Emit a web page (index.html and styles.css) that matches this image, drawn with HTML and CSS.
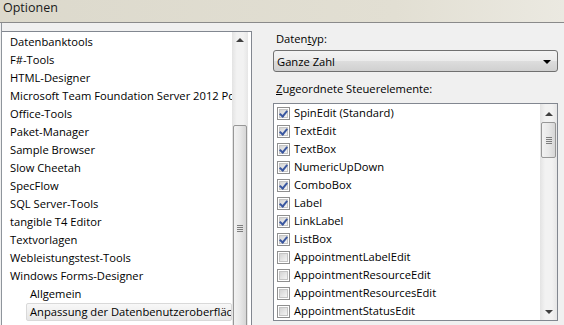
FILE: index.html
```html
<!DOCTYPE html>
<html lang="de">
<head>
    <meta charset="UTF-8">
    <title>Optionen</title>
    <link rel="stylesheet" href="styles.css">
</head>
<body>
    <div class="window">
        <div class="titlebar">Optionen</div>

        <div class="main">
            <div class="left">
                <div class="tree">
                    <div class="tree-items">
                        <div class="node">Datenbanktools</div>
                        <div class="node">F#-Tools</div>
                        <div class="node">HTML-Designer</div>
                        <div class="node">Microsoft Team Foundation Server 2012 Power Tools</div>
                        <div class="node">Office-Tools</div>
                        <div class="node">Paket-Manager</div>
                        <div class="node">Sample Browser</div>
                        <div class="node">Slow Cheetah</div>
                        <div class="node">SpecFlow</div>
                        <div class="node">SQL Server-Tools</div>
                        <div class="node">tangible T4 Editor</div>
                        <div class="node">Textvorlagen</div>
                        <div class="node">Webleistungstest-Tools</div>
                        <div class="node">Windows Forms-Designer</div>
                        <div class="node child">Allgemein</div>
                        <div class="node child selected"><span>Anpassung der Datenbenutzeroberfläche</span></div>
                    </div>
                    <div class="scrollbar tree-scroll">
                        <div class="arrow-box"><span class="arrow up"></span></div>
                        <div class="track short"></div>
                        <div class="thumb long"><span class="grip"></span></div>
                    </div>
                </div>
            </div>

            <div class="right">
                <div class="label">Daten<u>t</u>yp:</div>
                <div class="combo">
                    <span>Ganze Zahl</span>
                    <span class="combo-arrow"></span>
                </div>

                <div class="label second"><u>Z</u>ugeordnete Steuerelemente:</div>
                <div class="checklist">
                    <div class="check-items">
                        <div class="item"><span class="box on"></span>SpinEdit (Standard)</div>
                        <div class="item"><span class="box on"></span>TextEdit</div>
                        <div class="item"><span class="box on"></span>TextBox</div>
                        <div class="item"><span class="box on"></span>NumericUpDown</div>
                        <div class="item"><span class="box on"></span>ComboBox</div>
                        <div class="item"><span class="box on"></span>Label</div>
                        <div class="item"><span class="box on"></span>LinkLabel</div>
                        <div class="item"><span class="box on"></span>ListBox</div>
                        <div class="item"><span class="box"></span>AppointmentLabelEdit</div>
                        <div class="item"><span class="box"></span>AppointmentResourceEdit</div>
                        <div class="item"><span class="box"></span>AppointmentResourcesEdit</div>
                        <div class="item"><span class="box"></span>AppointmentStatusEdit</div>
                    </div>
                    <div class="scrollbar list-scroll">
                        <div class="arrow-box"><span class="arrow up"></span></div>
                        <div class="thumb small"><span class="grip"></span></div>
                        <div class="track fill"></div>
                        <div class="arrow-box"><span class="arrow down"></span></div>
                    </div>
                </div>
            </div>
        </div>
    </div>
</body>
</html>
```

FILE: styles.css
```css
body {
    margin: 0;
    font-family: "Segoe UI", "Open Sans", sans-serif;
    font-size: 11.2px;
    color: #000;
    background-color: #f0f0f0;
}

.window {
    width: 564px;
    height: 325px;
    overflow: hidden;
}

.titlebar {
    box-sizing: border-box;
    height: 23px;
    line-height: 16px;
    padding-left: 3px;
    font-size: 12.5px;
    color: #1a1a1a;
    background: linear-gradient(to right, #dcd9cc, #e2dfd3 70%, #ebe9e1);
    border-bottom: 1px solid #8a8a8a;
}

.main {
    display: flex;
    height: 302px;
}

.left {
    width: 250px;
    margin-left: 1px;
    border-left: 1px solid #8f959c;
    padding-top: 8px;
}

.tree {
    display: flex;
    height: 300px;
    background: white;
    border: 1px solid #828790;
    border-left: none;
    border-bottom: none;
    padding-right: 1px;
}

.tree-items {
    width: 230px;
    padding-top: 1px;
    overflow: hidden;
}

.node {
    height: 18px;
    line-height: 18px;
    padding-left: 8px;
    white-space: nowrap;
}

.node.child {
    padding-left: 28px;
}

.node.selected span {
    display: block;
    margin-left: -4px;
    padding-left: 3px;
    height: 16px;
    line-height: 16px;
    border: 1px solid #d9d9d9;
    border-radius: 2px;
    background: linear-gradient(#f8f8f8, #e6e6e6);
    overflow: hidden;
}

.scrollbar {
    width: 17px;
    display: flex;
    flex-direction: column;
    background: linear-gradient(to right, #e3e3e3, #f2f2f2 30%, #f2f2f2 70%, #e6e6e6);
}

.tree-scroll {
    width: 16px;
}

.arrow-box {
    height: 17px;
    display: flex;
    align-items: center;
    justify-content: center;
}

.arrow {
    width: 0;
    height: 0;
    border-left: 4px solid transparent;
    border-right: 4px solid transparent;
}

.arrow.up {
    border-bottom: 4px solid #404040;
}

.arrow.down {
    border-top: 4px solid #404040;
}

.track.short {
    height: 77px;
}

.track.fill {
    flex: 1;
}

.thumb {
    box-sizing: border-box;
    margin: 0 1px;
    border: 1px solid #979797;
    border-radius: 2px;
    background: linear-gradient(to right, #f2f2f2, #e8e8e8 50%, #d6d6d6);
    display: flex;
    align-items: center;
    justify-content: center;
}

.thumb.long {
    height: 210px;
}

.thumb.small {
    height: 36px;
}

.grip {
    width: 6px;
    height: 7px;
    background: repeating-linear-gradient(#505050 0, #505050 1px, transparent 1px, transparent 2px);
    opacity: 0.7;
}

.right {
    margin-left: 21px;
    width: 285px;
    padding-top: 8px;
}

.label {
    height: 16px;
    line-height: 16px;
    padding-left: 3px;
}

.label.second {
    margin-top: 9px;
}

.combo {
    margin-top: 3px;
    height: 22px;
    width: 285px;
    box-sizing: border-box;
    border: 1px solid #707070;
    border-radius: 3px;
    background: linear-gradient(#f3f3f3, #ebebeb 50%, #dddddd 51%, #d0d0d0);
    display: flex;
    align-items: center;
    justify-content: space-between;
    padding: 0 6px 0 3px;
}

.combo-arrow {
    width: 0;
    height: 0;
    border-left: 4px solid transparent;
    border-right: 4px solid transparent;
    border-top: 4px solid #000;
    margin-top: 1px;
}

.checklist {
    margin-top: 6px;
    height: 218px;
    box-sizing: border-box;
    border: 1px solid #828790;
    background: white;
    display: flex;
}

.check-items {
    flex: 1;
}

.item {
    height: 18px;
    line-height: 16px;
    display: flex;
    align-items: center;
    padding-left: 3px;
    padding-bottom: 1px;
    box-sizing: border-box;
    white-space: nowrap;
}

.box {
    width: 13px;
    height: 13px;
    box-sizing: border-box;
    border: 1px solid #8f8f8f;
    margin-right: 4px;
    margin-top: 2px;
    position: relative;
    background: white;
}

.box::before {
    content: "";
    position: absolute;
    left: 1px;
    top: 1px;
    right: 1px;
    bottom: 1px;
    background: linear-gradient(135deg, #d4d4d4, #f4f4f4);
    border: 1px solid #c4c4c4;
    box-sizing: border-box;
}

.box.on::after {
    content: "";
    position: absolute;
    left: 3px;
    top: 1px;
    width: 3px;
    height: 6px;
    border-right: 2px solid #3a57a0;
    border-bottom: 2px solid #3a57a0;
    transform: rotate(40deg);
}

.list-scroll {
    width: 17px;
    padding-top: 1px;
}
```
